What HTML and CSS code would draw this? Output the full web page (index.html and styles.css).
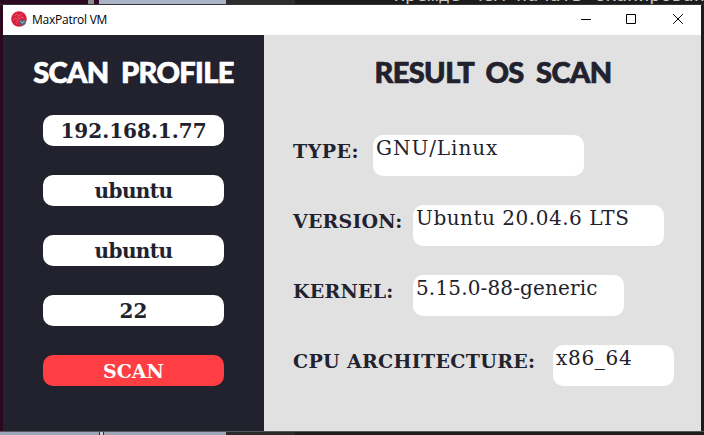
FILE: index.html
```
<!DOCTYPE html>
<html lang="en">
<head>
<meta charset="utf-8">
<title>MaxPatrol VM</title>
<link rel="stylesheet" href="styles.css">
</head>
<body>
<div class="desktop">
  <div class="behind-top"><span class="behind-text">Прежде чем начать сканирован</span></div>
  <div class="window">
    <header class="titlebar">
      <svg class="app-icon" viewBox="0 0 16 16" width="16" height="16">
        <circle cx="8" cy="8" r="7.8" fill="#d9213f"/>
        <path d="M3 5l3-2 2 2 3-2M2 9l3-2 2 3M5 13l2-3M7 5l1 3 3-2 2 1" fill="none" stroke="#f06a7c" stroke-width=".7"/>
        <path d="M8.3 9.5l3.5-1 3 1.2-.4 3.2-2.9 2-2.6-2z" fill="#52667f"/>
        <path d="M9.3 10.3l2.2 1.8 2-2.2" fill="none" stroke="#c7d0dc" stroke-width=".9"/>
      </svg>
      <span class="app-name">MaxPatrol VM</span>
      <div class="controls">
        <svg class="control" viewBox="0 0 46 30"><path d="M18 14.5h10" stroke="#000"/></svg>
        <svg class="control" viewBox="0 0 46 30"><path d="M17.5 9.5h9v9h-9z" fill="none" stroke="#000"/></svg>
        <svg class="control" viewBox="0 0 46 30"><path d="M18.2 9.2l9.6 9.6M27.8 9.2l-9.6 9.6" stroke="#000"/></svg>
      </div>
    </header>
    <main class="content">
      <section class="profile">
        <h1 class="heading"><span class="heading-text">SCAN PROFILE</span></h1>
        <div class="field">192.168.1.77</div>
        <div class="field user">ubuntu</div>
        <div class="field user">ubuntu</div>
        <div class="field">22</div>
        <button class="field scan">SCAN</button>
      </section>
      <section class="result">
        <h1 class="heading"><span class="heading-text">RESULT OS SCAN</span></h1>
        <div class="row"><span class="label type">TYPE:</span><div class="value os-type">GNU/Linux</div></div>
        <div class="row"><span class="label version">VERSION:</span><div class="value os-version">Ubuntu 20.04.6 LTS</div></div>
        <div class="row"><span class="label kernel">KERNEL:</span><div class="value os-kernel">5.15.0-88-generic</div></div>
        <div class="row"><span class="label cpu">CPU ARCHITECTURE:</span><div class="value os-cpu">x86_64</div></div>
      </section>
    </main>
  </div>
  <div class="behind-bottom"><span class="handle"></span></div>
</div>
</body>
</html>
```
FILE: styles.css
```
* { box-sizing: border-box; }
body { margin: 0; overflow: hidden; }
.desktop {
  width: 704px; height: 435px;
  display: flex; flex-direction: column;
  background: linear-gradient(90deg, #2b0820 0 300px, #1c1c1c 300px);
}
.behind-top {
  height: 5px; overflow: hidden; padding-left: 394px;
  border-bottom: 1px solid #353438;
  background: linear-gradient(90deg, #2d0922 0 88px, #8b8b8b 88px 94px, #2d0922 94px 99px, #acb5c7 99px 226px, #2d2d2d 226px 295px, #1c1c1c 295px);
}
.behind-text {
  display: block; margin-top: -16px; white-space: nowrap;
  font: 18.44px/22px "DejaVu Sans Mono", monospace; color: #c8c8c8;
}
.window { width: 698px; height: 426px; margin-left: 3px; display: flex; flex-direction: column; }
.titlebar { height: 30px; display: flex; align-items: center; background: #fff; padding-left: 8px; }
.app-icon { margin-top: -2px; }
.app-name { margin: -2px 0 0 5px; font: 12px "Open Sans", sans-serif; letter-spacing: -.25px; color: #000; }
.controls { display: flex; margin-left: auto; }
.control { width: 46px; height: 30px; }
.content { flex: 1; display: flex; }
.profile { width: 261px; padding: 17px 40px 0; background: #22222e; display: flex; flex-direction: column; align-items: center; }
.result { flex: 1; padding: 17px 0 0 29px; background: #e1e1e1; color: #22222e; }
.heading {
  margin: 0; height: 40px; display: flex; justify-content: center; white-space: nowrap;
  font: 900 29px/39px Lato, sans-serif; letter-spacing: -.6px; word-spacing: 6px;
  -webkit-text-stroke: .7px currentColor;
}
.profile .heading { color: #fff; margin-bottom: 23px; }
.result .heading { margin: 0 8px 43px 0; }
.field {
  width: 181px; height: 31px; flex: none; margin-bottom: 29px; border: 0; border-radius: 10px; padding: 1px 0 0;
  background: #fff; color: #22222e; text-align: center;
  font: bold 20px/31px "DejaVu Serif", serif;
}
.field.user { letter-spacing: -.6px; }
.field.scan { background: #ff3e43; color: #fff; font-size: 19px; }
.row { display: flex; height: 41px; margin-bottom: 29px; }
.label { white-space: nowrap; font: bold 19px/32px "DejaVu Serif", serif; }
.type { width: 80px; letter-spacing: .5px; }
.version, .kernel { width: 120px; letter-spacing: .2px; }
.cpu { width: 260px; letter-spacing: .33px; }
.value { height: 41px; border-radius: 10px; padding-left: 3px; background: #fff; font: 20px/26px "DejaVu Serif", serif; white-space: nowrap; }
.os-type { width: 211px; letter-spacing: .95px; }
.os-version { width: 251px; letter-spacing: .52px; }
.os-kernel { width: 211px; letter-spacing: .15px; }
.os-cpu { width: 121px; letter-spacing: .7px; }
.behind-bottom {
  height: 4px; padding-left: 99px; border-top: 1px solid #55555c;
  background: linear-gradient(90deg, #9da7b9 0 226px, #2a2a2a 226px 295px, #1c1c1c 295px);
}
.handle { display: block; width: 5px; height: 4px; background: #ccc; border: 1px solid #333; border-top: 0; }
```
